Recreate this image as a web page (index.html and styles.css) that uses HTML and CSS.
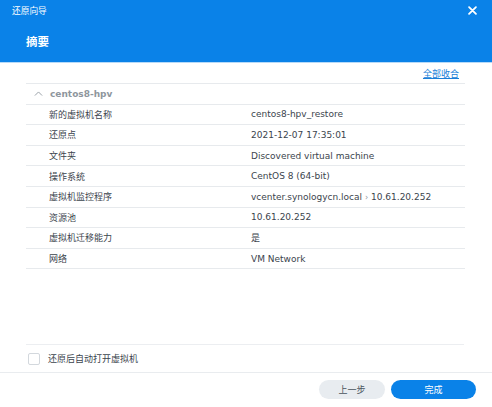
FILE: index.html
```html
<!DOCTYPE html>
<html lang="zh">
<head>
<meta charset="utf-8">
<link rel="stylesheet" href="styles.css">
</head>
<body>
<div class="dialog">
  <header class="header">
    <div class="titlebar">
      <span class="title">还原向导</span>
      <svg class="close" viewBox="0 0 10 10" width="9" height="9"><path d="M1.2 1.2L8.8 8.8M8.8 1.2L1.2 8.8" stroke="#fff" stroke-width="2" stroke-linecap="round"/></svg>
    </div>
    <div class="subtitle">摘要</div>
  </header>
  <main class="content">
    <div class="linkrow"><a class="collapse" href="#">全部收合</a></div>
    <div class="table">
      <div class="row group">
        <svg class="chev" viewBox="0 0 10 6" width="9" height="5.5"><path d="M1 5L5 1L9 5" fill="none" stroke="#9aa1a8" stroke-width="1.1"/></svg>
        <span>centos8-hpv</span>
      </div>
      <div class="row"><span class="label">新的虚拟机名称</span><span class="value">centos8-hpv_restore</span></div>
      <div class="row"><span class="label">还原点</span><span class="value">2021-12-07 17:35:01</span></div>
      <div class="row"><span class="label">文件夹</span><span class="value">Discovered virtual machine</span></div>
      <div class="row"><span class="label">操作系统</span><span class="value">CentOS 8 (64-bit)</span></div>
      <div class="row"><span class="label">虚拟机监控程序</span><span class="value">vcenter.synologycn.local <span class="sep">›</span> 10.61.20.252</span></div>
      <div class="row"><span class="label">资源池</span><span class="value">10.61.20.252</span></div>
      <div class="row"><span class="label">虚拟机迁移能力</span><span class="value">是</span></div>
      <div class="row"><span class="label">网络</span><span class="value">VM Network</span></div>
    </div>
  </main>
  <div class="checkrow">
    <span class="checkbox"></span>
    <span class="checktext">还原后自动打开虚拟机</span>
  </div>
  <footer class="footer">
    <button class="btn prev">上一步</button>
    <button class="btn done">完成</button>
  </footer>
</div>
</body>
</html>
```

FILE: styles.css
```css
* { box-sizing: border-box; }
html, body { margin: 0; padding: 0; }
body {
  width: 492px;
  height: 407px;
  overflow: hidden;
  background: #fff;
  font-family: "DejaVu Sans", "Noto Sans CJK SC", sans-serif;
  font-size: 9px;
  color: #3b444d;
}
.dialog {
  display: flex;
  flex-direction: column;
  height: 407px;
}
.header {
  height: 63px;
  background: #0a82e8;
  border-bottom: 1px solid #b7daf8;
  color: #fff;
  display: flex;
  flex-direction: column;
}
.titlebar {
  height: 20px;
  display: flex;
  align-items: center;
  justify-content: space-between;
  padding: 0 15px 0 12px;
}
.title {
  font-size: 8.7px;
  font-family: "Noto Sans CJK SC", sans-serif;
}
.close { display: block; }
.subtitle {
  flex: 1;
  display: flex;
  align-items: center;
  padding-left: 26px;
  font-family: "Noto Sans CJK SC", sans-serif;
  font-weight: 700;
  font-size: 11.5px;
}
.content {
  flex: 1;
  padding: 0 27px 0 26px;
}
.linkrow {
  height: 20px;
  display: flex;
  align-items: center;
  justify-content: flex-end;
  padding-right: 6px;
}
.collapse {
  color: #1a7fd8;
  text-decoration: underline;
  font-family: "Noto Sans CJK SC", sans-serif;
  font-size: 9px;
}
.table {
  border-top: 1px solid #e7eaed;
}
.row {
  height: 20.6px;
  border-bottom: 1px solid #e7eaed;
  display: flex;
  align-items: center;
  padding-left: 23px;
}
.row.group {
  padding-left: 8px;
  color: #8e969d;
  font-weight: 700;
}
.chev { margin-right: 7px; display: block; }
.label { width: 202px; flex: none; }
.value { flex: 1; }
.sep { color: #8e969d; font-size: 8px; }
.checkrow {
  height: 28px;
  margin: 0 28px 0 26px;
  border-top: 1px solid #eceef1;
  display: flex;
  align-items: center;
  padding-left: 2px;
}
.checkbox {
  width: 12px;
  height: 12px;
  border: 1px solid #d3d8dd;
  border-radius: 2px;
  background: #fff;
  margin-right: 8px;
}
.checktext { font-family: "Noto Sans CJK SC", sans-serif; }
.footer {
  height: 35px;
  border-top: 1px solid #e9ecef;
  display: flex;
  align-items: center;
  justify-content: flex-end;
  gap: 6px;
  padding: 0 16px 2px 0;
}
.btn {
  height: 19px;
  border: none;
  border-radius: 10px;
  font-family: "Noto Sans CJK SC", sans-serif;
  font-size: 9px;
  padding: 0;
}
.prev { width: 66px; background: #e8ecf0; color: #4a545e; }
.done { width: 85px; background: #0a82e8; color: #fff; }
```
